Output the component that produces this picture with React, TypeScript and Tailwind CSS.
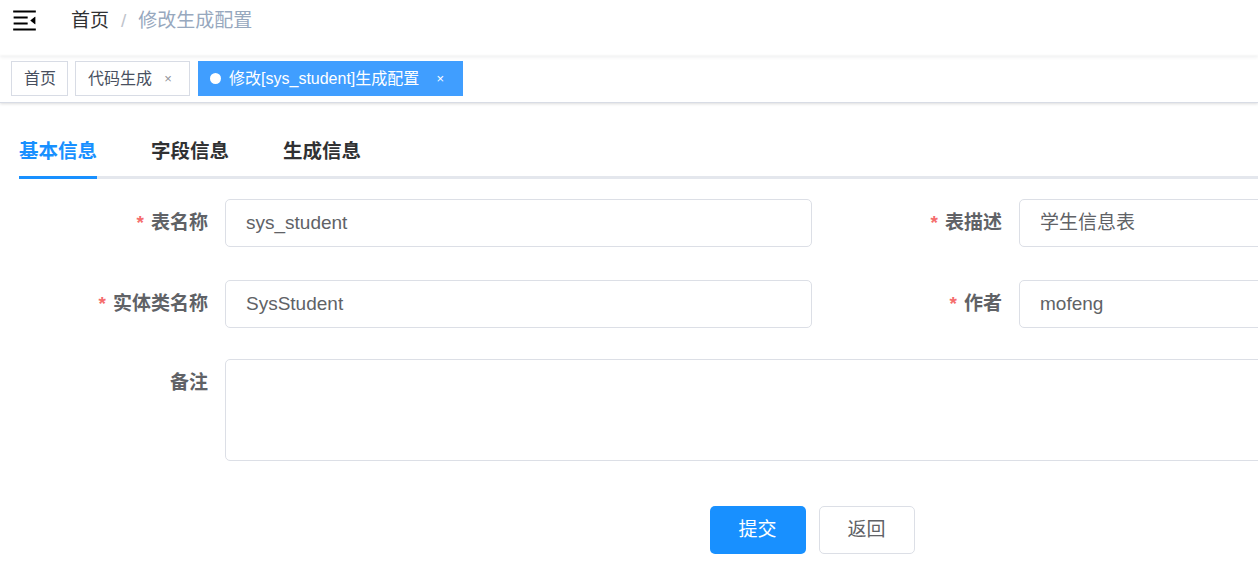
import React from "react";

const font = { fontFamily: '"Liberation Sans", "Noto Sans CJK SC", sans-serif' };

function Hamburger() {
  return (
    <svg viewBox="0 0 1024 1024" className="w-[29px] h-[29px] rotate-180" fill="#000">
      <path d="M408 442h480c4.4 0 8-3.6 8-8v-56c0-4.4-3.6-8-8-8H408c-4.4 0-8 3.6-8 8v56c0 4.4 3.6 8 8 8zm-8 204c0 4.4 3.6 8 8 8h480c4.4 0 8-3.6 8-8v-56c0-4.4-3.6-8-8-8H408c-4.4 0-8 3.6-8 8v56zm504-486H120c-4.4 0-8 3.6-8 8v56c0 4.4 3.6 8 8 8h784c4.4 0 8-3.6 8-8v-56c0-4.4-3.6-8-8-8zm0 632H120c-4.4 0-8 3.6-8 8v56c0 4.4 3.6 8 8 8h784c4.4 0 8-3.6 8-8v-56c0-4.4-3.6-8-8-8zM142.4 642.1L298.7 519a8.840 8.840 0 0 0 0-13.9L142.4 381.9c-5.8-4.6-14.4-.5-14.4 6.9v246.3a8.8 8.8 0 0 0 14.4 7z" />
    </svg>
  );
}

function Tag({ label, active, closable }: { label: string; active?: boolean; closable?: boolean }) {
  if (active) {
    return (
      <div className="flex items-center h-[35px] pl-[11px] pr-[13px] border border-[#409eff] bg-[#409eff] text-white text-[16px]">
        <span className="w-[11px] h-[11px] rounded-full bg-white mr-[8px]" />
        <span>{label}</span>
        <span className="ml-[12px] w-[18px] text-center text-[13px] text-white">×</span>
      </div>
    );
  }
  return (
    <div
      className={
        closable
          ? "flex items-center h-[35px] px-[12px] border border-[#d8dce5] bg-white text-[#495060] text-[16px]"
          : "flex items-center h-[35px] pl-[12px] pr-[11px] border border-[#d8dce5] bg-white text-[#495060] text-[16px]"
      }
    >
      <span>{label}</span>
      {closable && <span className="ml-[7px] w-[18px] text-center text-[13px] text-[#909399]">×</span>}
    </div>
  );
}

function Field({ label, value, required }: { label: string; value: string; required?: boolean }) {
  return (
    <div className="flex w-[794px]">
      <label className="w-[207px] pr-[17px] text-right leading-[48px] font-bold text-[19px] text-[#606266]">
        {required && <span className="text-[#f56c6c] mr-[7px]">*</span>}
        {label}
      </label>
      <div className="flex-1 h-[48px] border border-[#dcdfe6] rounded-[5px] px-[20px] flex items-center text-[19px] text-[#606266]">
        {value}
      </div>
    </div>
  );
}

export default function App() {
  return (
    <div className="w-[1258px] h-[578px] overflow-hidden bg-white" style={font}>
      <div className="relative h-[56px] flex items-start shadow-[0_1px_4px_rgba(0,21,41,0.08)]">
        <div className="ml-[10px] mt-[6px]">
          <Hamburger />
        </div>
        <div className="ml-[32px] mt-[1px] leading-[40px] text-[19px] flex">
          <span className="text-[#303133]">首页</span>
          <span className="mx-[12px] text-[#c0c4cc]">/</span>
          <span className="text-[#97a8be]">修改生成配置</span>
        </div>
      </div>

      <div className="h-[47px] border-b border-[#d8dce5] shadow-[0_1px_3px_rgba(0,0,0,0.12),0_0_3px_rgba(0,0,0,0.04)] flex items-start pt-[5px] pl-[11px] gap-[7px]">
        <Tag label="首页" />
        <div className="pr-[1px]">
          <Tag label="代码生成" closable />
        </div>
        <Tag label="修改[sys_student]生成配置" active closable />
      </div>

      <div className="pl-[19px] pt-[24px]">
        <div className="relative border-b-[3px] border-[#e4e7ed] flex w-[1600px]">
          <div className="relative flex items-center h-[49px] pr-[27px] text-[19.5px] font-bold text-[#1890ff]">
            基本信息
            <span className="absolute left-0 right-[27px] -bottom-[3px] h-[3px] bg-[#1890ff]" />
          </div>
          <div className="flex items-center h-[49px] px-[27px] text-[19.5px] font-bold text-[#303133]">字段信息</div>
          <div className="flex items-center h-[49px] px-[27px] text-[19.5px] font-bold text-[#303133]">生成信息</div>
        </div>
      </div>

      <div className="pl-[18px] mt-[20px] w-[1606px]">
        <div className="flex">
          <Field label="表名称" value="sys_student" required />
          <Field label="表描述" value="学生信息表" required />
        </div>
        <div className="flex mt-[33px]">
          <Field label="实体类名称" value="SysStudent" required />
          <Field label="作者" value="mofeng" required />
        </div>
        <div className="flex mt-[31px]">
          <label className="w-[207px] pr-[17px] text-right leading-[48px] font-bold text-[19px] text-[#606266]">
            备注
          </label>
          <div className="flex-1 h-[102px] border border-[#dcdfe6] rounded-[5px]" />
        </div>
        <div className="flex justify-center gap-[13px] mt-[45px]">
          <button className="w-[96px] h-[48px] rounded-[5px] bg-[#1890ff] text-white text-[19px]">提交</button>
          <button className="w-[96px] h-[48px] rounded-[5px] border border-[#dcdfe6] bg-white text-[#606266] text-[19px]">
            返回
          </button>
        </div>
      </div>
    </div>
  );
}
